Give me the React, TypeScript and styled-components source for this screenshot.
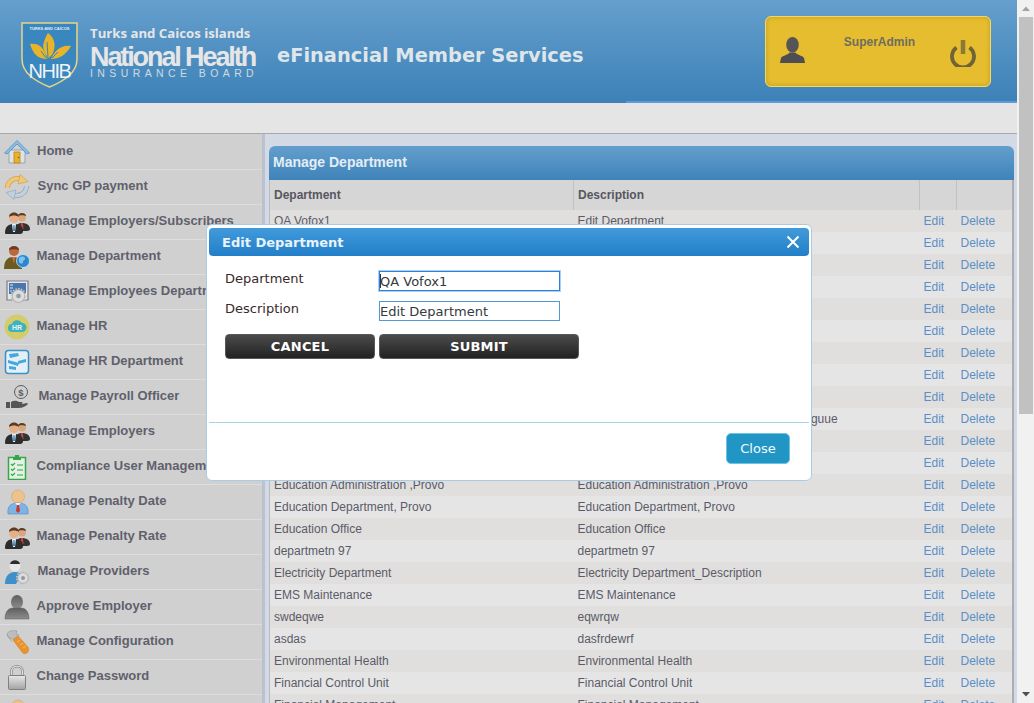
import React from "react";
import styled, { createGlobalStyle } from "styled-components";

const GlobalStyle = createGlobalStyle`
  html, body {
    margin: 0;
    padding: 0;
    height: 100%;
    overflow: hidden;
    background: #f1f1f1;
  }
  * {
    box-sizing: border-box;
  }
`;

const Viewport = styled.div`
  height: 100vh;
  display: flex;
  overflow: hidden;
  position: relative;
`;

const PageClip = styled.div`
  width: 1017px;
  flex: none;
  overflow: hidden;
`;

const ScrollTrack = styled.div`
  width: 17px;
  flex: none;
  display: flex;
  flex-direction: column;
  background: #f1f1f1;
`;

const ScrollArrow = styled.svg`
  width: 17px;
  height: 17px;
  flex: none;
`;

const ScrollThumb = styled.div`
  height: 397px;
  flex: none;
  margin: 0 1px 0 2px;
  background: #c1c1c1;
`;

const ScrollRest = styled.div`
  flex: 1;
`;

const Page = styled.div`
  height: 1185px;
  display: flex;
  flex-direction: column;
  font-family: "Liberation Sans", Arial, sans-serif;
  background: #d3dae6;
`;

const Header = styled.header`
  height: 103px;
  flex: none;
  display: flex;
  align-items: flex-start;
  padding: 16px 26px 0 21px;
  background: linear-gradient(to bottom, #659fcd, #3c81b7);
  position: relative;

  &::after {
    content: "";
    position: absolute;
    left: 626px;
    right: 0;
    bottom: 0;
    height: 2px;
    background: #5c9bd8;
  }
`;

const Logo = styled.div`
  display: flex;
  align-items: flex-start;
  gap: 12px;
  padding-top: 6px;
`;

const LogoWords = styled.div`
  width: 170px;
  display: flex;
  flex-direction: column;
  color: #e6e6e6;
  font-family: "Open Sans", "Liberation Sans", sans-serif;
`;

const LogoTop = styled.div`
  font-size: 13.2px;
  font-weight: 700;
  line-height: 20px;
  margin-top: 1px;
  white-space: nowrap;
`;

const LogoMain = styled.div`
  font-family: "Liberation Sans", sans-serif;
  font-size: 27px;
  font-weight: 700;
  line-height: 22px;
  margin-top: 2.5px;
  letter-spacing: -2.1px;
  white-space: nowrap;
`;

const LogoSub = styled.div`
  font-family: "Liberation Sans", sans-serif;
  font-size: 10.5px;
  line-height: 10px;
  letter-spacing: 4.4px;
  white-space: nowrap;
  opacity: 0.85;
`;

const AppTitle = styled.h1`
  margin: 27px 0 0 17px;
  font-family: "DejaVu Sans", sans-serif;
  font-size: 19.4px;
  line-height: 26px;
  font-weight: 700;
  color: #dfe6ea;
  white-space: nowrap;
`;

const UserBox = styled.div`
  margin-left: auto;
  width: 226px;
  height: 71px;
  padding: 0 14px 0 13px;
  display: flex;
  align-items: flex-start;
  background: #e5bd2f;
  border: 1px solid #f1dc62;
  border-radius: 6px;
  box-shadow: inset 0 0 4px #c29a24;
`;

const UserIcon = styled.svg`
  width: 27px;
  height: 27px;
  margin-top: 20px;
  flex: none;
`;

const UserName = styled.div`
  flex: 1;
  text-align: center;
  padding: 18px 0 0 3px;
  font-size: 12px;
  line-height: 15px;
  font-weight: 700;
  color: #6f6d5e;
`;

const PowerIcon = styled.svg`
  width: 26px;
  height: 28px;
  margin-top: 22px;
  flex: none;
`;

const SubBar = styled.div`
  height: 31px;
  flex: none;
  background: #e5e5e5;
  border-bottom: 1px solid #a8a8a8;
`;

const Body = styled.div`
  flex: 1;
  display: flex;
  min-height: 0;
`;

const Sidebar = styled.nav`
  width: 262px;
  flex: none;
  padding-top: 1px;
  background: #d0d0d0;
`;

const Splitter = styled.div`
  width: 3px;
  flex: none;
  background: #bac2cf;
`;

const MenuItem = styled.a<{ $nudge?: number }>`
  height: 35px;
  display: flex;
  align-items: center;
  padding: 0 0 4px 4px;
  border-bottom: 1px solid #dddddd;
  font-size: 13px;
  font-weight: 700;
  color: #60606c;
  white-space: nowrap;
  overflow: hidden;

  span {
    margin-left: ${(p) => 6.5 + (p.$nudge ?? 0)}px;
  }
`;

const MenuIcon = styled.svg`
  width: 26px;
  height: 26px;
  flex: none;
  margin-top: 3px;
`;

const Main = styled.main`
  flex: 1;
  min-width: 0;
  padding: 12px 3px 0 4px;
`;

const Panel = styled.section`
  border-radius: 6px 6px 0 0;
  overflow: hidden;
  background: #e5e5e5;
`;

const PanelTitle = styled.h2`
  margin: 0;
  height: 34px;
  padding: 0 0 2px 4px;
  display: flex;
  align-items: center;
  font-size: 14px;
  font-weight: 700;
  color: #e4edf5;
  background: linear-gradient(to bottom, #639fcd, #3f83b9);
`;

const Table = styled.table`
  width: 745px;
  table-layout: fixed;
  border-collapse: collapse;
  font-size: 12px;
  color: #5b5b68;
  border-left: 1px solid #b8bcc2;
  border-right: 2px solid #a9adb4;
`;

const HeadCell = styled.th`
  height: 30px;
  padding: 0 0 0 4px;
  text-align: left;
  font-weight: 700;
  color: #565660;
  background: #d6d6d6;
  border-right: 1px solid #c2c2c2;
`;

const Row = styled.tr`
  height: 22px;
  background: #e5e5e5;
  &:nth-child(odd) {
    background: #e0dfdd;
  }
`;

const Cell = styled.td`
  padding: 0 0 0 4px;
  white-space: nowrap;
  overflow: hidden;
`;

const RowLink = styled.a`
  color: #5b8fc7;
`;

const Modal = styled.div`
  position: absolute;
  left: 206px;
  top: 224px;
  width: 606px;
  height: 257px;
  padding: 3px 2px;
  display: flex;
  flex-direction: column;
  background: #ffffff;
  border: 1px solid #a9cce6;
  border-radius: 6px;
  font-family: "DejaVu Sans", sans-serif;
`;

const ModalHead = styled.div`
  height: 28px;
  flex: none;
  padding: 0 9px 0 13px;
  display: flex;
  align-items: center;
  justify-content: space-between;
  border-radius: 4px;
  background: linear-gradient(to bottom, #419ada, #227fc8);
  font-size: 13px;
  font-weight: 700;
  color: #e8f3fb;
`;

const ModalBody = styled.div`
  flex: none;
  height: 167px;
  padding: 15px 16px 0;
  display: flex;
  flex-direction: column;
  border-bottom: 1px solid #a5d2ee;
`;

const FormRow = styled.label`
  height: 30px;
  display: flex;
  align-items: flex-start;
  font-size: 13px;
  color: #3b2a2a;
`;

const FieldName = styled.span`
  width: 154px;
  flex: none;
  line-height: 15px;
`;

const Field = styled.input<{ $focused?: boolean }>`
  width: 181px;
  height: 20px;
  padding: 0;
  font-family: "DejaVu Sans", sans-serif;
  font-size: 13px;
  color: #333a40;
  background: ${(p) =>
    p.$focused ? "linear-gradient(#333, #333) 0 2px / 1px 14px no-repeat #fff" : "#fff"};
  border: 1px solid ${(p) => (p.$focused ? "#2f80d8" : "#4f9ad2")};
  outline: ${(p) => (p.$focused ? "1px solid #a9d0f5" : "none")};
  border-radius: 0;
`;

const Buttons = styled.div`
  display: flex;
  gap: 4px;
  margin-top: 3px;
`;

const DarkButton = styled.button<{ $w: number }>`
  width: ${(p) => p.$w}px;
  height: 25px;
  padding: 0;
  border: 1px solid #55595c;
  border-radius: 4px;
  background: linear-gradient(to bottom, #4b4b4b, #222222);
  font-family: "DejaVu Sans", sans-serif;
  font-size: 13px;
  font-weight: 700;
  letter-spacing: 0.2px;
  color: #ffffff;
`;

const ModalFoot = styled.div`
  flex: 1;
  padding: 10px 19px 0 0;
  display: flex;
  justify-content: flex-end;
  align-items: flex-start;
`;

const CloseButton = styled.button`
  width: 64px;
  height: 31px;
  padding: 0;
  background: #2196c4;
  border: 1px solid #6cc3e6;
  border-radius: 5px;
  font-family: "DejaVu Sans", sans-serif;
  font-size: 13px;
  color: #f4fbff;
`;

const Shield = () => (
  <svg width="57" height="66" viewBox="0 0 57 66">
    <path d="M1 1h55v36c0 14-13 22-27.500 28C14 59 1 51 1 37z" fill="#3a86be" stroke="#e9d584" strokeWidth="1.500" />
    <text x="28.500" y="7.500" fontSize="4" fontWeight="700" textAnchor="middle" fill="#e8eef2" fontFamily="Liberation Sans">
      TURKS AND CAICOS
    </text>
    <path d="M27 11c7 5 8 13 5 20-1 2-3 4-5 5-4-6-6-11-4-16 1-3 2-6 4-9z" fill="#e8b52a" />
    <path d="M9 22c7-1 12 2 15 9l2 6c-9 0-14-5-17-15z" fill="#e8b52a" />
    <path d="M50 24c-6-1-11 1-15 5-2 3-4 5-5 8 8 0 15-4 20-13z" fill="#e8b52a" />
    <path d="M26 20l1 15M20 29l5 7M37 30l-6 6" stroke="#3a86be" strokeWidth="1" fill="none" />
    <text x="28.500" y="56" fontSize="20" textAnchor="middle" fill="#eef4f8" fontFamily="Liberation Sans" letterSpacing="-1.500">
      NHIB
    </text>
  </svg>
);

const People = () => (
  <MenuIcon viewBox="0 0 26 26">
    <circle cx="18" cy="8.500" r="4" fill="#d9a77e" />
    <path d="M14 7c0-4 8-4 8 0-2-1-6-1-8 0z" fill="#5b3a22" />
    <path d="M11 22c0-6 3-8 7-8s8 2 8 6c0 1-1 2-3 2z" fill="#333" />
    <path d="M17 14h2l.500 6h-3z" fill="#c8403a" />
    <circle cx="10" cy="9" r="5" fill="#e3b08a" />
    <path d="M5 8c0-6 10-6 10 0-3-2-7-2-10 0z" fill="#5b3a22" />
    <path d="M1 24c0-7 4-9 9-9s9 2 9 7c0 2-1 3-3 3H3c-1 0-2 0-2-1z" fill="#2c2c2c" />
    <path d="M8 15h4l-1 8h-2z" fill="#eef2f5" />
    <path d="M9.500 16h1l.500 6h-2z" fill="#2d83c6" />
  </MenuIcon>
);

const Gear = ({ cx, cy, r }: { cx: number; cy: number; r: number }) => (
  <g>
    <circle cx={cx} cy={cy} r={r} fill="none" stroke="#c9c9c9" strokeWidth="2" strokeDasharray="1.500 1.200" />
    <circle cx={cx} cy={cy} r={r - 0.7} fill="#dcdcdc" stroke="#9a9a9a" strokeWidth="0.600" />
    <circle cx={cx} cy={cy} r={r / 3} fill="#8f9aa5" />
  </g>
);

const icons: Record<string, React.ReactNode> = {
  home: (
    <MenuIcon viewBox="0 0 26 26">
      <path d="M5 11h16v13H5z" fill="#dfe2e4" stroke="#9ba3a9" />
      <path d="M0.500 14L13 1.500 25.500 14 23 15 13 5 3 15z" fill="#8dbde6" stroke="#4f8fca" strokeWidth="0.800" />
      <path d="M10 13h6v11h-6z" fill="#eab12d" stroke="#b98718" strokeWidth="0.800" />
      <circle cx="14.500" cy="18.500" r="0.800" fill="#8a5b12" />
    </MenuIcon>
  ),
  sync: (
    <MenuIcon viewBox="0 0 26 26">
      <path d="M3.500 14A9.500 9.500 0 0 1 17 5.500" fill="none" stroke="#cfa24f" strokeWidth="5" />
      <path d="M3.500 14A9.500 9.500 0 0 1 17 5.500" fill="none" stroke="#efc878" strokeWidth="3.600" />
      <path d="M16 0.500l8 7-10 2.500z" fill="#efc878" stroke="#cfa24f" strokeWidth="0.700" />
      <path d="M22.500 12A9.500 9.500 0 0 1 9 20.500" fill="none" stroke="#93a7ba" strokeWidth="5" />
      <path d="M22.500 12A9.500 9.500 0 0 1 9 20.500" fill="none" stroke="#c3d1de" strokeWidth="3.600" />
      <path d="M10 25.500l-8-7 10-2.500z" fill="#c3d1de" stroke="#93a7ba" strokeWidth="0.700" />
    </MenuIcon>
  ),
  people: <People />,
  dept: (
    <MenuIcon viewBox="0 0 26 26">
      <circle cx="10" cy="7" r="5" fill="#b9683f" />
      <path d="M5 6c0-5 10-5 10 0-3-1-7-1-10 0z" fill="#6f3a1d" />
      <path d="M0 25c0-9 4-12 9-12s9 3 9 8v4z" fill="#6b5a22" />
      <path d="M8 13h3l-1 7z" fill="#d66a3a" />
      <circle cx="19" cy="17" r="6.500" fill="#2e86cf" stroke="#c7e2f5" strokeWidth="0.800" />
      <path d="M15 14c2-2 5-2 6 0s-2 2-2 4-3 2-4 0z" fill="#7cc3ee" />
    </MenuIcon>
  ),
  screen: (
    <MenuIcon viewBox="0 0 26 26">
      <path d="M3 2h21v19H3z" fill="#e4e6e8" stroke="#7b7f86" strokeWidth="1.200" />
      <path d="M5 4h17v11H5z" fill="#4a76b0" />
      <path d="M6 6h3M6 9h3M6 12h2" stroke="#dfe9f3" strokeWidth="1.200" />
      <Gear cx={14.500} cy={17} r={7} />
    </MenuIcon>
  ),
  hr: (
    <MenuIcon viewBox="0 0 26 26">
      <circle cx="13" cy="13" r="12.500" fill="#d2cc6a" />
      <path d="M8 18a4 4 0 0 1 0-8 5.500 5.500 0 0 1 10-1 4.500 4.500 0 0 1 0 9z" fill="#3fb2bd" />
      <text x="13" y="16" fontSize="7" textAnchor="middle" fill="#e6f6f7" fontFamily="Liberation Sans">
        HR
      </text>
    </MenuIcon>
  ),
  org: (
    <MenuIcon viewBox="0 0 26 26">
      <rect x="1.500" y="1.500" width="23" height="23" rx="3" fill="#e3f0f8" stroke="#3a91c8" strokeWidth="1.500" />
      <path d="M5 5l9-1 1 3-9 2zM4 11l11 3-1 3-10-3zM14 12l8-2v3l-8 2zM5 17l7 1v3l-7-1z" fill="#46a7dd" />
    </MenuIcon>
  ),
  payroll: (
    <MenuIcon viewBox="0 0 26 26">
      <circle cx="17" cy="8" r="6.500" fill="none" stroke="#5c5c5c" strokeWidth="1" />
      <text x="17" y="11.500" fontSize="9.500" textAnchor="middle" fill="#5c5c5c" fontFamily="Liberation Sans">
        $
      </text>
      <path d="M2 18h4v6H2z" fill="#555" />
      <path d="M7 18c3-2 6-1 8 0h3c1 1 0 2-1 2h-5 6l5-1c1 0 1 1 0 2-4 3-7 3-10 3H7z" fill="#555" />
    </MenuIcon>
  ),
  clipboard: (
    <MenuIcon viewBox="0 0 26 26">
      <rect x="4.500" y="3.500" width="17" height="22" fill="#e3f2e4" stroke="#37a64b" strokeWidth="1.500" />
      <path d="M9 3h8v3H9zM11 1h4v2h-4z" fill="#37a64b" />
      <path d="M7 10l1.500 1.500L11 9M7 15l1.500 1.500L11 14M7 20l1.500 1.500L11 19" stroke="#37a64b" strokeWidth="1.200" fill="none" />
      <path d="M13 11h6M13 16h6M13 21h6" stroke="#6abf78" strokeWidth="1.500" />
    </MenuIcon>
  ),
  tie: (
    <MenuIcon viewBox="0 0 26 26">
      <circle cx="14" cy="7.500" r="6.500" fill="#edc38c" stroke="#c99d66" strokeWidth="0.500" />
      <path d="M4 25c-1-8 3-11 10-11s11 3 10 11z" fill="#7eb3e6" stroke="#4f87c5" strokeWidth="0.600" />
      <path d="M11 14h6l-3 3z" fill="#eef4fa" />
      <path d="M13 16h2l1 6-2 2-2-2z" fill="#c83a2c" />
    </MenuIcon>
  ),
  provider: (
    <MenuIcon viewBox="0 0 26 26">
      <circle cx="11" cy="7" r="5.500" fill="#e7e7e7" />
      <path d="M6 5c1-5 9-5 10 0z" fill="#2d2d2d" />
      <path d="M1 25c0-8 4-12 10-12 3 0 5 1 6 3l-5 9z" fill="#3f8fc9" />
      <Gear cx={19} cy={19} r={6} />
    </MenuIcon>
  ),
  gray: (
    <MenuIcon viewBox="0 0 26 26">
      <defs>
        <linearGradient id="grayUser" x1="0" y1="0" x2="0" y2="1">
          <stop offset="0" stopColor="#5f5f5f" />
          <stop offset="1" stopColor="#8c8c8c" />
        </linearGradient>
      </defs>
      <ellipse cx="13" cy="8" rx="6" ry="7" fill="url(#grayUser)" />
      <path d="M1 25c0-8 4-11 8-11h8c4 0 8 3 8 11z" fill="url(#grayUser)" stroke="#5d5d5d" strokeWidth="0.500" />
    </MenuIcon>
  ),
  wrench: (
    <MenuIcon viewBox="0 0 26 26">
      <path d="M10 10l5-4-3-1 1-3c-4-1-9 0-10 3 1 4 3 5 7 5zM3 6l5 7" fill="#bdbdbd" stroke="#888" strokeWidth="0.500" />
      <path d="M9 11l5-4 10 11c1 2 1 4-1 6-2 1-4 1-5-1z" fill="#ea932e" stroke="#cf7a1b" strokeWidth="0.500" />
      <path d="M13 13l3-2M16 16l3-2M19 19l3-2" stroke="#f6c07c" strokeWidth="0.800" />
    </MenuIcon>
  ),
  lock: (
    <MenuIcon viewBox="0 0 26 26">
      <defs>
        <linearGradient id="lockBody" x1="0" y1="0" x2="0" y2="1">
          <stop offset="0" stopColor="#e8e8e8" />
          <stop offset="1" stopColor="#a2a2a2" />
        </linearGradient>
      </defs>
      <path d="M7.500 12V7.500c0-7 11-7 11 0V12" fill="none" stroke="#8a8a8a" strokeWidth="2.600" />
      <path d="M7.500 12V7.500c0-7 11-7 11 0V12" fill="none" stroke="#dedede" strokeWidth="1.200" />
      <rect x="4.500" y="11.500" width="17" height="14" rx="1" fill="url(#lockBody)" stroke="#7f7f7f" />
    </MenuIcon>
  ),
};

const menu = [
  { label: "Home", icon: "home", nudge: 0.5 },
  { label: "Sync GP payment", icon: "sync", nudge: 1 },
  { label: "Manage Employers/Subscribers", icon: "people" },
  { label: "Manage Department", icon: "dept" },
  { label: "Manage Employees Department", icon: "screen" },
  { label: "Manage HR", icon: "hr" },
  { label: "Manage HR Department", icon: "org" },
  { label: "Manage Payroll Officer", icon: "payroll", nudge: 2 },
  { label: "Manage Employers", icon: "people" },
  { label: "Compliance User Management", icon: "clipboard" },
  { label: "Manage Penalty Date", icon: "tie" },
  { label: "Manage Penalty Rate", icon: "people" },
  { label: "Manage Providers", icon: "provider", nudge: 1 },
  { label: "Approve Employer", icon: "gray" },
  { label: "Manage Configuration", icon: "wrench" },
  { label: "Change Password", icon: "lock" },
  { label: "Logout", icon: "tie" },
];

// rows under the dialog are never seen, so they stay blank
const rows: [string, string][] = [
  ["QA Vofox1", "Edit Department"],
  ["", ""],
  ["", ""],
  ["", ""],
  ["", ""],
  ["", ""],
  ["", ""],
  ["", ""],
  ["", ""],
  ["", "Department of Environment, Maritime, Colloguue"],
  ["", ""],
  ["", ""],
  ["Education Administration ,Provo", "Education Administration ,Provo"],
  ["Education Department, Provo", "Education Department, Provo"],
  ["Education Office", "Education Office"],
  ["departmetn 97", "departmetn 97"],
  ["Electricity Department", "Electricity Department_Description"],
  ["EMS Maintenance", "EMS Maintenance"],
  ["swdeqwe", "eqwrqw"],
  ["asdas", "dasfrdewrf"],
  ["Environmental Health", "Environmental Health"],
  ["Financial Control Unit", "Financial Control Unit"],
  ["Financial Management", "Financial Management"],
];

export default function App() {
  return (
    <>
      <GlobalStyle />
      <Viewport>
        <PageClip>
          <Page>
            <Header>
              <Logo>
                <Shield />
                <LogoWords>
                  <LogoTop>Turks and Caicos islands</LogoTop>
                  <LogoMain>National Health</LogoMain>
                  <LogoSub>INSURANCE BOARD</LogoSub>
                </LogoWords>
              </Logo>
              <AppTitle>eFinancial Member Services</AppTitle>
              <UserBox>
                <UserIcon viewBox="0 0 28 28">
                  <ellipse cx="14" cy="8" rx="6.500" ry="8" fill="#555558" />
                  <path d="M1 27l1-5c1-3 7-3 9-6h6c2 3 8 3 9 6l1 5z" fill="#4e4e52" />
                </UserIcon>
                <UserName>SuperAdmin</UserName>
                <PowerIcon viewBox="0 0 26 28">
                  <path d="M6.500 8.500a11 11 0 1 0 13 0" fill="none" stroke="#6f6338" strokeWidth="3.800" />
                  <path d="M13 1v14" stroke="#8a7a35" strokeWidth="4.500" />
                </PowerIcon>
              </UserBox>
            </Header>
            <SubBar />
            <Body>
              <Sidebar>
                {menu.map((m) => (
                  <MenuItem key={m.label} $nudge={m.nudge}>
                    {icons[m.icon]}
                    <span>{m.label}</span>
                  </MenuItem>
                ))}
              </Sidebar>
              <Splitter />
              <Main>
                <Panel>
                  <PanelTitle>Manage Department</PanelTitle>
                  <Table>
                    <colgroup>
                      <col style={{ width: 304 }} />
                      <col style={{ width: 346 }} />
                      <col style={{ width: 37 }} />
                      <col />
                    </colgroup>
                    <thead>
                      <tr>
                        <HeadCell>Department</HeadCell>
                        <HeadCell>Description</HeadCell>
                        <HeadCell />
                        <HeadCell />
                      </tr>
                    </thead>
                    <tbody>
                      {rows.map(([name, desc], i) => (
                        <Row key={i}>
                          <Cell>{name}</Cell>
                          <Cell>{desc}</Cell>
                          <Cell>
                            <RowLink>Edit</RowLink>
                          </Cell>
                          <Cell>
                            <RowLink>Delete</RowLink>
                          </Cell>
                        </Row>
                      ))}
                    </tbody>
                  </Table>
                </Panel>
              </Main>
            </Body>
          </Page>
        </PageClip>
        <ScrollTrack>
          <ScrollArrow viewBox="0 0 17 17">
            <path d="M5 11h8L9 6.500z" fill="#a3a3a3" />
          </ScrollArrow>
          <ScrollThumb />
          <ScrollRest />
          <ScrollArrow viewBox="0 0 17 17">
            <path d="M5 6h8l-4 4.500z" fill="#505050" />
          </ScrollArrow>
        </ScrollTrack>
        <Modal>
          <ModalHead>
            Edit Department
            <svg width="14" height="14" viewBox="0 0 14 14">
              <path d="M1.500 1.500l11 11M12.500 1.500l-11 11" stroke="#fff" strokeWidth="2" />
            </svg>
          </ModalHead>
          <ModalBody>
            <FormRow>
              <FieldName>Department</FieldName>
              <Field $focused readOnly value="QA Vofox1" />
            </FormRow>
            <FormRow>
              <FieldName>Description</FieldName>
              <Field readOnly value="Edit Department" />
            </FormRow>
            <Buttons>
              <DarkButton $w={150}>CANCEL</DarkButton>
              <DarkButton $w={200}>SUBMIT</DarkButton>
            </Buttons>
          </ModalBody>
          <ModalFoot>
            <CloseButton>Close</CloseButton>
          </ModalFoot>
        </Modal>
      </Viewport>
    </>
  );
}
